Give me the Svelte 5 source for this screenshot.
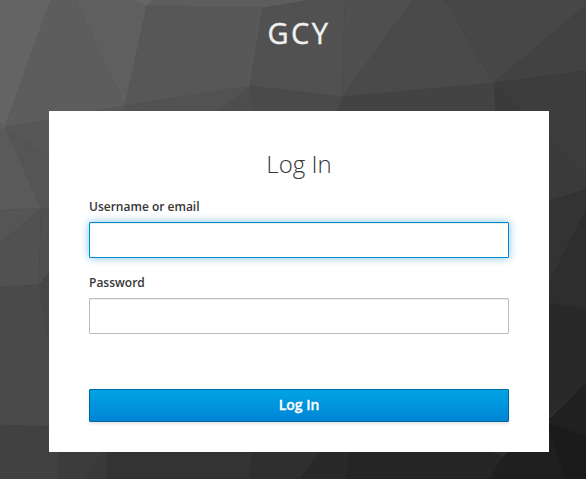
<script>
  let username = $state('');
  let password = $state('');

  const facets = [
    ['0,0 51,0 5,127 0,122', '#646464'],
    ['51,0 75,0 125,106 5,127', '#5d5d5d'],
    ['75,0 130,0 147,6 125,106', '#5f5f5f'],
    ['130,0 153,0 147,6', '#656565'],
    ['153,0 312,0 263,8 147,6', '#5d5d5d'],
    ['147,6 263,8 250,86', '#585858'],
    ['147,6 250,86 125,106', '#575757'],
    ['263,8 312,0 345,0 342,97 250,86', '#515151'],
    ['345,0 413,0 342,97', '#4f4f4f'],
    ['413,0 445,0 494,83 342,97', '#4a4a4a'],
    ['445,0 586,0 586,5 494,83', '#474747'],
    ['586,5 586,71 494,83', '#424242'],
    ['494,83 586,71 586,175', '#3d3d3d'],
    ['494,83 586,175 586,190 500,214', '#3a3a3a'],
    ['342,97 494,83 500,214 300,190', '#434343'],
    ['250,86 342,97 330,130 257,130', '#4a4a4a'],
    ['250,86 257,130 196,130', '#4d4d4d'],
    ['125,106 250,86 196,130 121,130', '#525252'],
    ['5,127 125,106 121,130 49,158', '#575757'],
    ['5,127 49,158 60,205 41,209', '#555555'],
    ['0,132 5,127 41,209 0,210', '#5a5a5a'],
    ['0,122 5,127 0,132', '#5f5f5f'],
    ['41,209 0,244 0,210', '#555555'],
    ['41,209 39,285 0,287 0,244', '#515151'],
    ['41,209 60,205 60,258 39,285', '#4f4f4f'],
    ['39,285 60,258 60,294', '#464646'],
    ['39,285 60,294 60,436', '#474747'],
    ['0,287 39,285 60,427 0,425', '#4a4a4a'],
    ['0,425 58,427 59,479 0,479', '#414141'],
    ['58,427 119,427 84,479 59,479', '#3c3c3c'],
    ['119,427 108,427 107,479 84,479', '#393939'],
    ['108,427 255,427 250,479 107,479', '#333333'],
    ['255,427 340,427 300,479 250,479', '#2f2f2f'],
    ['340,427 354,427 347,479 300,479', '#292929'],
    ['354,427 440,427 503,457 490,479 347,479', '#252525'],
    ['440,427 545,421 503,457', '#2e2e2e'],
    ['503,457 549,417 566,479 490,479', '#1f1f1f'],
    ['540,203 586,190 586,211 540,300', '#333333'],
    ['586,211 586,309 540,302 540,300', '#2e2e2e'],
    ['540,302 586,309 586,383 540,425', '#292929'],
    ['586,383 586,437 546,422', '#202020'],
    ['546,422 586,437 586,479 566,479', '#1b1b1b']
  ];
</script>

<div class="page">
  <svg class="backdrop" viewBox="0 0 586 479" preserveAspectRatio="none" aria-hidden="true">
    {#each facets as [points, color]}
      <polygon {points} fill={color} stroke={color} stroke-width="0.5" />
    {/each}
  </svg>
  <header>GCY</header>
  <main>
    <h1>Log In</h1>
    <form onsubmit={(event) => event.preventDefault()}>
      <label for="username">Username or email</label>
      <input id="username" class="active" type="text" bind:value={username} />
      <label for="password">Password</label>
      <input id="password" type="password" bind:value={password} />
      <button type="submit">Log In</button>
    </form>
  </main>
</div>

<style>
  :global(body) { margin: 0; }
  .page {
    position: relative;
    width: 586px;
    height: 479px;
    overflow: hidden;
    background: #3a3a3a;
    font-family: "Open Sans", "Noto Sans", sans-serif;
    color: #363636;
  }
  .backdrop {
    position: absolute;
    inset: 0;
    width: 100%;
    height: 100%;
  }
  header {
    position: relative;
    box-sizing: border-box;
    height: 111px;
    padding: 13px 0 0 12px;
    text-align: center;
    font-size: 29px;
    line-height: 40px;
    letter-spacing: 2.5px;
    -webkit-text-stroke: 0.4px #f0f0f0;
    color: #f0f0f0;
  }
  main {
    position: relative;
    box-sizing: border-box;
    width: 500px;
    height: 341px;
    margin-left: 49px;
    padding: 38px 40px 0;
    background: #fff;
  }
  h1 {
    margin: 0 0 11px;
    text-align: center;
    font-size: 24px;
    font-weight: 300;
    line-height: 30px;
  }
  form { display: flex; flex-direction: column; }
  label {
    height: 32px;
    font-size: 12px;
    font-weight: 600;
    line-height: 33px;
  }
  input {
    box-sizing: border-box;
    width: 100%;
    height: 36px;
    margin: 0 0 8px;
    padding: 2px 10px;
    border: 1px solid #bbb;
    border-radius: 1px;
    outline: none;
    background: #fff;
    box-shadow: inset 0 1px 1px rgba(3, 3, 3, 0.075);
    font: inherit;
    font-size: 14px;
  }
  .active {
    border-color: #0088ce;
    box-shadow: inset 0 1px 1px rgba(3, 3, 3, 0.075), 0 0 8px rgba(0, 136, 206, 0.5);
  }
  button {
    box-sizing: border-box;
    height: 33px;
    margin-top: 47px;
    padding: 0 0 2px;
    border: 1px solid #00659c;
    border-radius: 1px;
    background: linear-gradient(#00a3e3, #0085d6);
    box-shadow: 0 2px 3px rgba(3, 3, 3, 0.1);
    color: #fff;
    font: inherit;
    font-size: 14px;
    font-weight: 600;
    -webkit-text-stroke: 0.3px #fff;
    line-height: 29px;
  }
</style>
